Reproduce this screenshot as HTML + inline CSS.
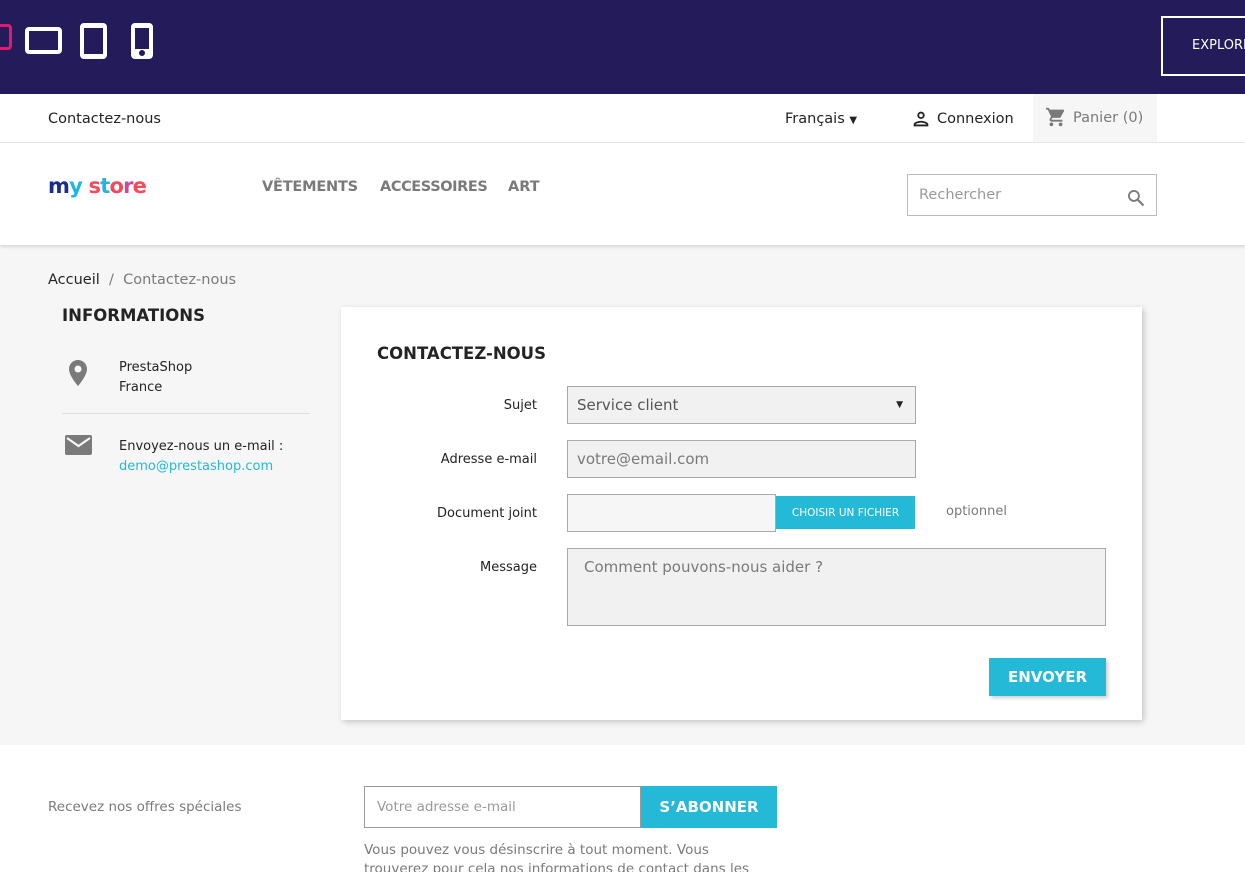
<!DOCTYPE html>
<html><head><meta charset="utf-8"><style>
*{box-sizing:border-box;margin:0;padding:0}
html,body{width:1245px;height:872px;overflow:hidden}
body{font-family:"DejaVu Sans","Liberation Sans",sans-serif;background:#f6f6f6;color:#232323;position:relative}
.a{position:absolute}
#top{left:0;top:0;width:1245px;height:94px;background:#241c5a}
#nav{left:0;top:94px;width:1245px;height:49px;background:#fff;border-bottom:1px solid #e5e5e5}
#hdr{left:0;top:143px;width:1245px;height:102px;background:#fff;box-shadow:0 2px 3px rgba(0,0,0,.12)}
.t{white-space:nowrap}
#card{left:341px;top:307px;width:801px;height:413px;background:#fff;box-shadow:2px 2px 6px rgba(0,0,0,.2)}
.lbl{font-size:13px;color:#232323;text-align:right;width:120px}
.inp{background:#f1f1f1;border:1px solid #aaa;font-size:15px;color:#7a7a7a;padding-left:9px}
#foot{left:0;top:745px;width:1245px;height:127px;background:#fff}
</style></head><body>
<div id="top" class="a">
 <div class="a" style="left:-10px;top:24px;width:22px;height:26px;border:3px solid #e5176f;border-radius:4px"></div>
 <div class="a" style="left:25px;top:27px;width:37px;height:27px;border:4px solid #fff;border-radius:4px"></div>
 <div class="a" style="left:80px;top:23px;width:27px;height:36px;border:4px solid #fff;border-top-width:5px;border-bottom-width:5px;border-radius:4px"></div>
 <div class="a" style="left:131px;top:23px;width:22px;height:36px;border:4px solid #fff;border-top-width:5px;border-bottom-width:10px;border-radius:4px"></div>
 <div class="a" style="left:139px;top:50px;width:6px;height:6px;border-radius:3px;background:#241c5a"></div>
 <div class="a" style="left:1161px;top:16px;width:100px;height:60px;border:2px solid #fff"></div>
 <div class="a t" style="left:1192px;top:38px;color:#fff;font-size:13px">EXPLORE</div>
</div>
<div id="nav" class="a">
 <div class="a t" style="left:48px;top:17px;font-size:14.5px">Contactez-nous</div>
 <div class="a t" style="left:785px;top:17px;font-size:14.5px">Français <span style="font-size:10px">▼</span></div>
 <svg class="a" style="left:910px;top:14px" width="22" height="22" viewBox="0 0 24 24"><path fill="#232323" d="M12 12a4 4 0 1 0 0-8 4 4 0 0 0 0 8zm0-6a2 2 0 1 1 0 4 2 2 0 0 1 0-4zm0 8c-2.7 0-8 1.3-8 4v2h16v-2c0-2.7-5.3-4-8-4zm-6 4c.2-.7 3.3-2 6-2s5.8 1.3 6 2H6z"/></svg>
 <div class="a t" style="left:937px;top:17px;font-size:14.5px">Connexion</div>
 <div class="a" style="left:1033px;top:0;width:124px;height:48px;background:#f6f6f6"></div>
 <svg class="a" style="left:1045px;top:12px" width="22" height="22" viewBox="0 0 24 24"><path fill="#7a7a7a" d="M7 18a2 2 0 1 0 0 4 2 2 0 0 0 0-4zM1 2v2h2l3.6 7.6-1.4 2.4c-.1.3-.2.6-.2 1 0 1.1.9 2 2 2h12v-2H7.4c-.1 0-.2-.1-.2-.2v-.1l.9-1.7h7.4c.8 0 1.4-.4 1.7-1l3.6-6.5c.1-.2.1-.3.1-.5 0-.6-.4-1-1-1H5.2l-.9-2H1zm16 16a2 2 0 1 0 0 4 2 2 0 0 0 0-4z"/></svg>
 <div class="a t" style="left:1073px;top:16px;font-size:14.5px;color:#7a7a7a">Panier (0)</div>
</div>
<div id="hdr" class="a">
 <div class="a t" style="left:48px;top:31px;font-size:21px;font-weight:bold;letter-spacing:-0.8px"><span style="color:#1a2c8f">m</span><span style="color:#1fb6e0">y</span> <span style="color:#f44b5c">s</span><span style="color:#1fb6e0">t</span><span style="color:#f44b5c">o</span><span style="color:#c44ca0">r</span><span style="color:#f44b5c">e</span></div>
 <div class="a t" style="left:262px;top:36px;font-size:14.5px;font-weight:bold;color:#7a7a7a;letter-spacing:-0.2px">VÊTEMENTS</div>
 <div class="a t" style="left:380px;top:36px;font-size:14.5px;font-weight:bold;color:#7a7a7a;letter-spacing:-0.4px">ACCESSOIRES</div>
 <div class="a t" style="left:508px;top:36px;font-size:14.5px;font-weight:bold;color:#7a7a7a">ART</div>
 <div class="a" style="left:907px;top:31px;width:250px;height:42px;border:1px solid #bbb"></div>
 <div class="a t" style="left:919px;top:44px;font-size:14.5px;color:#999">Rechercher</div>
 <svg class="a" style="left:1126px;top:45px" width="20" height="20" viewBox="0 0 24 24"><circle cx="9.5" cy="9.5" r="6" fill="none" stroke="#7a7a7a" stroke-width="2.2"/><path d="M14 14l7 7" stroke="#7a7a7a" stroke-width="2.6"/></svg>
</div>
<div class="a t" style="left:48px;top:272px;font-size:14.5px">Accueil <span style="color:#7a7a7a">&nbsp;/&nbsp; Contactez-nous</span></div>
<div class="a t" style="left:62px;top:306px;font-size:16.5px;font-weight:bold">INFORMATIONS</div>
<svg class="a" style="left:66px;top:358px" width="24" height="30" viewBox="0 0 24 30"><path fill="#7a7a7a" d="M12 2C7 2 3 6 3 11c0 7 9 17 9 17s9-10 9-17c0-5-4-9-9-9zm0 12.5a3.5 3.5 0 1 1 0-7 3.5 3.5 0 0 1 0 7z"/></svg>
<div class="a t" style="left:119px;top:358px;font-size:13px;line-height:20px">PrestaShop<br>France</div>
<div class="a" style="left:62px;top:413px;width:248px;height:1px;background:#ddd"></div>
<svg class="a" style="left:64px;top:433px" width="29" height="24" viewBox="0 0 29 24"><rect x="1" y="2" width="27" height="20" rx="2" fill="#7a7a7a"/><path d="M3 5l11.5 8L26 5" fill="none" stroke="#f6f6f6" stroke-width="2.2"/></svg>
<div class="a t" style="left:119px;top:437px;font-size:13px;line-height:20px">Envoyez-nous un e-mail :<br><span style="color:#24b9d7">demo@prestashop.com</span></div>
<div id="card" class="a">
 <div class="a t" style="left:36px;top:37px;font-size:16.5px;font-weight:bold">CONTACTEZ-NOUS</div>
 <div class="a lbl t" style="left:76px;top:91px">Sujet</div>
 <div class="a inp t" style="left:226px;top:79px;width:349px;height:38px;line-height:37px;color:#555">Service client<span style="position:absolute;right:12px;font-size:9px;color:#232323">▼</span></div>
 <div class="a lbl t" style="left:76px;top:145px">Adresse e-mail</div>
 <div class="a inp t" style="left:226px;top:133px;width:349px;height:38px;line-height:37px">votre@email.com</div>
 <div class="a lbl t" style="left:76px;top:199px">Document joint</div>
 <div class="a inp" style="left:226px;top:187px;width:209px;height:38px;background:#f6f6f6"></div>
 <div class="a t" style="left:435px;top:189px;width:139px;height:33px;background:#24b9d7;color:#fff;font-size:10.5px;line-height:34px;text-align:center">CHOISIR UN FICHIER</div>
 <div class="a t" style="left:605px;top:197px;font-size:13px;color:#7a7a7a">optionnel</div>
 <div class="a lbl t" style="left:76px;top:253px">Message</div>
 <div class="a inp t" style="left:226px;top:241px;width:539px;height:78px;padding-top:9px;padding-left:16px">Comment pouvons-nous aider ?</div>
 <div class="a t" style="left:648px;top:351px;width:117px;height:38px;background:#24b9d7;color:#fff;font-size:15px;font-weight:bold;line-height:38px;text-align:center;box-shadow:2px 2px 4px rgba(0,0,0,.2)">ENVOYER</div>
</div>
<div id="foot" class="a">
 <div class="a t" style="left:48px;top:54px;font-size:13.5px;color:#7a7a7a">Recevez nos offres spéciales</div>
 <div class="a t" style="left:364px;top:41px;width:277px;height:42px;border:1px solid #999;font-size:13.5px;color:#999;line-height:41px;padding-left:12px">Votre adresse e-mail</div>
 <div class="a t" style="left:641px;top:41px;width:136px;height:42px;background:#24b9d7;color:#fff;font-size:15px;font-weight:bold;line-height:42px;text-align:center">S’ABONNER</div>
 <div class="a t" style="left:364px;top:96px;font-size:13.5px;color:#7a7a7a;line-height:19px">Vous pouvez vous désinscrire à tout moment. Vous<br>trouverez pour cela nos informations de contact dans les</div>
</div>
</body></html>
